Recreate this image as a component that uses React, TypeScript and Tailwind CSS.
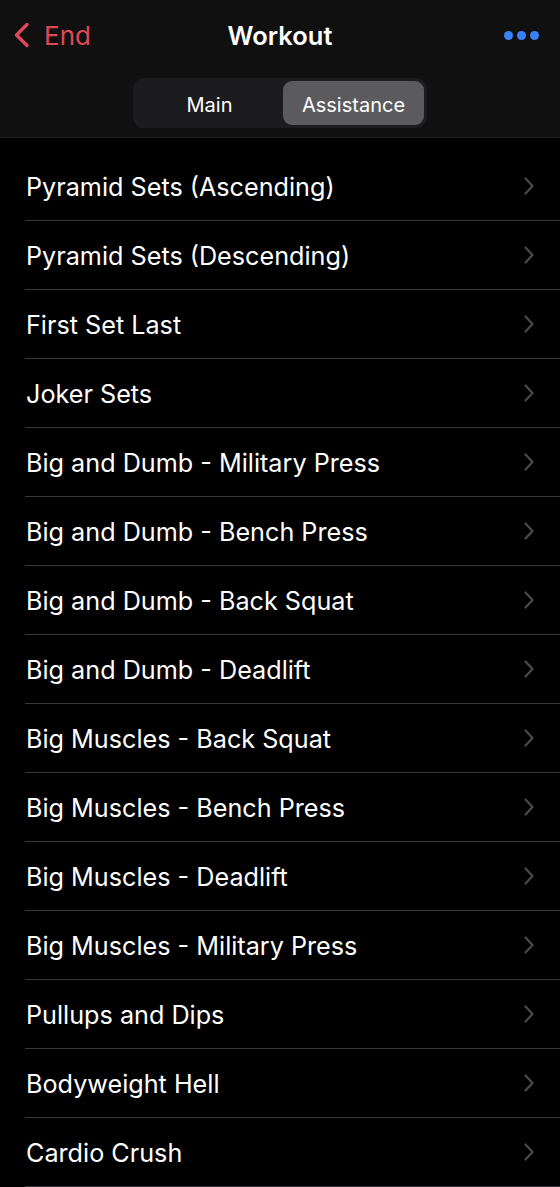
import React from "react";

const items = [
  "Pyramid Sets (Ascending)",
  "Pyramid Sets (Descending)",
  "First Set Last",
  "Joker Sets",
  "Big and Dumb - Military Press",
  "Big and Dumb - Bench Press",
  "Big and Dumb - Back Squat",
  "Big and Dumb - Deadlift",
  "Big Muscles - Back Squat",
  "Big Muscles - Bench Press",
  "Big Muscles - Deadlift",
  "Big Muscles - Military Press",
  "Pullups and Dips",
  "Bodyweight Hell",
  "Cardio Crush",
];

export default function App() {
  return (
    <div
      className="w-[560px] h-[1187px] bg-black text-white overflow-hidden"
      style={{ fontFamily: "Inter, 'Noto Sans', sans-serif" }}
    >
      <div className="bg-[#101010] border-b border-[#222224] h-[138px] flex flex-col">
        <div className="relative h-[70px] flex items-center justify-between px-[13px]">
          <div className="flex items-center gap-[14px] text-[#e0485a]">
            <svg width="17" height="26" viewBox="0 0 17 26" fill="none">
              <path d="M14 2.5 L3.5 13 L14 23.5" stroke="#e0485a" strokeWidth="3.4" strokeLinecap="round" strokeLinejoin="round" />
            </svg>
            <span className="text-[26px] leading-none mt-[1px]">End</span>
          </div>
          <div className="absolute left-0 right-0 text-center text-[25.5px] font-semibold leading-none pointer-events-none pt-[1px]">
            Workout
          </div>
          <div className="flex items-center gap-[4px] mr-[8px]">
            <span className="w-[9px] h-[9px] rounded-full bg-[#3b80f5]" />
            <span className="w-[9px] h-[9px] rounded-full bg-[#3b80f5]" />
            <span className="w-[9px] h-[9px] rounded-full bg-[#3b80f5]" />
          </div>
        </div>
        <div className="flex justify-center mt-[8px]">
          <div className="w-[294px] h-[50px] rounded-[11px] bg-[#1c1c1e] p-[3px] flex">
            <div className="flex-1 flex items-center justify-center text-[20px] pt-[3px]">Main</div>
            <div className="w-[141px] rounded-[9px] bg-[#5b5b5e] flex items-center justify-center text-[20px] pt-[3px]">
              Assistance
            </div>
          </div>
        </div>
      </div>
      <div className="pt-[14px]">
        {items.map((t) => (
          <div key={t} className="pl-[25px]">
            <div className="h-[69px] flex items-center justify-between pr-[26px] border-b border-[#38383a]">
              <span className="text-[25.2px] pl-[1px] pt-[3px]">{t}</span>
              <svg width="10" height="18" viewBox="0 0 10 18" fill="none">
                <path d="M1.5 1.5 L8.5 9 L1.5 16.5" stroke="#4a4a4c" strokeWidth="2.2" strokeLinecap="round" strokeLinejoin="round" />
              </svg>
            </div>
          </div>
        ))}
      </div>
    </div>
  );
}
